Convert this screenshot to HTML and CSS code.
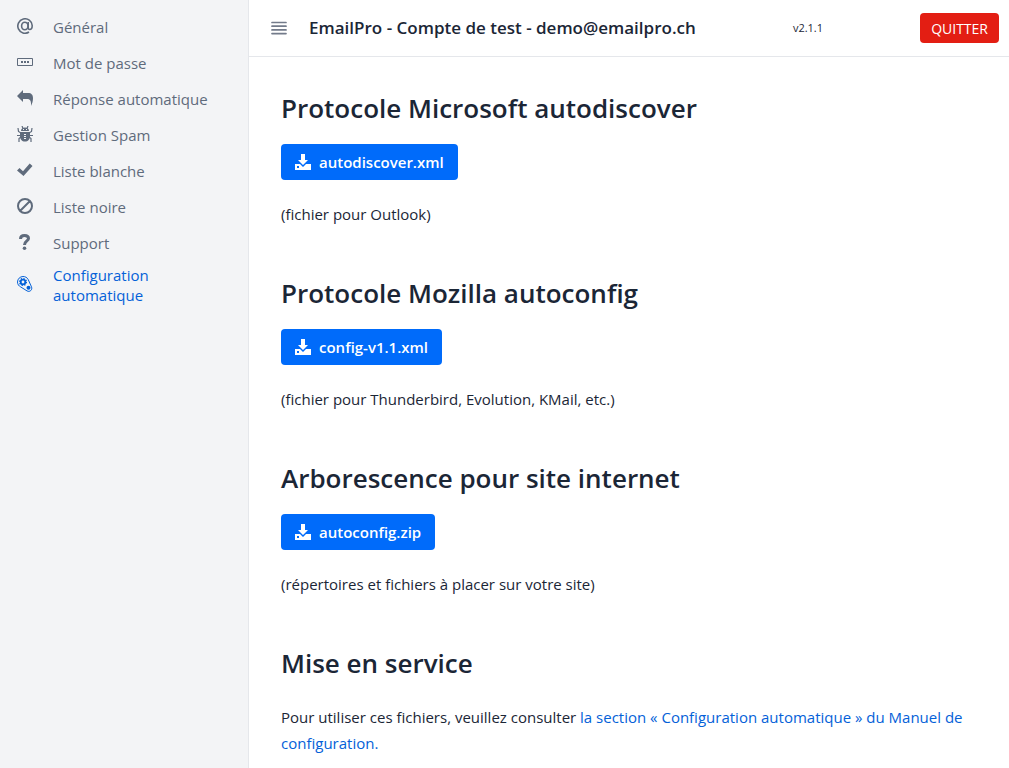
FILE: index.html
```html
<!DOCTYPE html>
<html lang="fr">
<head>
  <meta charset="UTF-8">
  <meta name="viewport" content="width=device-width, initial-scale=1">
  <title>EmailPro</title>
  <link rel="stylesheet" href="styles.css">
</head>
<body>
  <svg class="symbols" aria-hidden="true">
    <symbol id="download" viewBox="0 0 16 16">
      <path d="M6 0h4v6h3l-5 5-5-5h3z"/>
      <path fill-rule="evenodd" d="M0 10h5l3 3 3-3h5v6H0zM2 12v2h2v-2z"/>
    </symbol>
  </svg>
  <div class="layout">
    <nav class="sidebar">
      <ul class="menu">
        <li><a class="menu-link" href="#general">
          <svg class="icon" viewBox="0 0 16 16"><g fill="none" stroke="currentColor" stroke-width="1.600"><path d="M12 14A7.200 7.200 0 1 1 15.200 7.500c0 2.500-1 4-2.500 4-1 0-1.500-.7-1.500-2V4"/><ellipse cx="7.800" cy="8" rx="3.200" ry="3.700"/></g></svg>
          <span>Général</span></a></li>
        <li><a class="menu-link" href="#password">
          <svg class="icon" viewBox="0 0 16 16"><path fill="none" stroke="currentColor" d="M.5 4.500h15v7H.5z"/><path d="M4 7h2v2H4zM7 7h2v2H7zM10 7h2v2h-2z"/></svg>
          <span>Mot de passe</span></a></li>
        <li><a class="menu-link" href="#reply">
          <svg class="icon" viewBox="0 0 16 16"><path d="M0 6l6-6v3h5c3.500 0 5 2 5 5 0 3-.7 5.500-2 8 .3-4.500-.5-7-4-7H6v3z"/></svg>
          <span>Réponse automatique</span></a></li>
        <li><a class="menu-link" href="#spam">
          <svg class="icon" viewBox="0 0 16 16"><path fill-rule="evenodd" d="M4 5c0-2 1.500-3.500 4-3.500S12 3 12 5zM6 3v1h1V3zM9 3v1h1V3z"/><path fill-rule="evenodd" d="M3 6h10v4c0 3.500-2 5.500-5 5.500S3 13.500 3 10zM7 8v1h2V8zM7 10v1h2v-1zM7 12v1h2v-1z"/><path fill="none" stroke="currentColor" stroke-width="1.200" d="M6 2.500L5 0M10 2.500l1-2.500M4 7L1.500 5.500 1 2M12 7l2.500-1.500L15 2M4 9.500H0M12 9.500h4M4 11l-2 1.500V16M12 11l2 1.500V16"/></svg>
          <span>Gestion Spam</span></a></li>
        <li><a class="menu-link" href="#whitelist">
          <svg class="icon" viewBox="0 0 16 16"><path d="M0 8.500L2.500 6 6 9.200 12.700 1.500 15.500 4 6.500 14z"/></svg>
          <span>Liste blanche</span></a></li>
        <li><a class="menu-link" href="#blacklist">
          <svg class="icon" viewBox="0 0 16 16"><path fill="none" stroke="currentColor" stroke-width="2" d="M15 8A7 7 0 1 1 1 8a7 7 0 0 1 14 0zM3 13L13 3"/></svg>
          <span>Liste noire</span></a></li>
        <li><a class="menu-link" href="#support">
          <svg class="icon" viewBox="0 0 16 16"><path fill="none" stroke="currentColor" stroke-width="3" d="M3.500 5C3.500 2.500 5 1.500 7.500 1.500c2.500 0 4 1 4 3C11.500 7 7.500 7 7.500 11"/><circle cx="7.500" cy="14.200" r="1.800"/></svg>
          <span>Support</span></a></li>
        <li><a class="menu-link active" href="#autoconfig" aria-current="page">
          <svg class="icon" viewBox="0 0 16 16"><path fill="none" stroke="currentColor" d="M6 .5C3 .5.5 3 .5 6c0 2.300 1.300 4 3.300 5l6.200 3.900c3 1.600 5.700-1.300 4.500-4L11.200 3.500C10.100 1.500 8.300.5 6 .5z"/><circle cx="6" cy="6" r="2.300" fill="none" stroke="currentColor" stroke-width="1.800"/><circle cx="6" cy="6" r="3.400" fill="none" stroke="currentColor" stroke-width="1.300" stroke-dasharray="1.335"/><circle cx="11.500" cy="11.800" r="2"/></svg>
          <span>Configuration automatique</span></a></li>
      </ul>
    </nav>
    <div class="page">
      <header class="topbar">
        <button class="toggle" type="button" aria-label="Menu">
          <svg class="icon" viewBox="0 0 16 16"><path fill="none" stroke="currentColor" stroke-width="1.700" stroke-linecap="round" d="M1 2.500h14M1 6.200h14M1 9.900h14M1 13.600h14"/></svg>
        </button>
        <h1 class="title">EmailPro - Compte de test - demo@emailpro.ch</h1>
        <span class="version">v2.1.1</span>
        <button class="quit" type="button">QUITTER</button>
      </header>
      <main class="content">
        <section>
          <h2>Protocole Microsoft autodiscover</h2>
          <a class="button" href="#autodiscover.xml"><svg class="icon"><use href="#download"/></svg>autodiscover.xml</a>
          <p>(fichier pour Outlook)</p>
        </section>
        <section>
          <h2>Protocole Mozilla autoconfig</h2>
          <a class="button" href="#config-v1.1.xml"><svg class="icon"><use href="#download"/></svg>config-v1.1.xml</a>
          <p>(fichier pour Thunderbird, Evolution, KMail, etc.)</p>
        </section>
        <section>
          <h2>Arborescence pour site internet</h2>
          <a class="button" href="#autoconfig.zip"><svg class="icon"><use href="#download"/></svg>autoconfig.zip</a>
          <p>(répertoires et fichiers à placer sur votre site)</p>
        </section>
        <section>
          <h2>Mise en service</h2>
          <p>Pour utiliser ces fichiers, veuillez consulter <a href="#manuel">la section «&nbsp;Configuration automatique&nbsp;» du Manuel de configuration.</a></p>
        </section>
      </main>
    </div>
  </div>
</body>
</html>
```
FILE: styles.css
```css
* { box-sizing: border-box; }
body { margin: 0; font-family: "Segoe UI", "Open Sans", sans-serif; font-size: 15px; line-height: 26px; color: #1b2636; background: #fff; }
a { color: #0461d8; text-decoration: none; }
.symbols { display: none; }
.icon { flex: none; width: 16px; height: 16px; fill: currentColor; }

.layout { display: flex; min-height: 100vh; }

.sidebar { flex: none; width: 249px; background: #f3f4f6; border-right: 1px solid #e5e7eb; }
.menu { list-style: none; margin: 0; padding: 9px 72px 8px 17px; }
.menu-link { display: flex; align-items: center; gap: 20px; min-height: 36px; padding: 4px 0; line-height: 20px; color: #5f6b7c; white-space: nowrap; }
.menu-link .icon { margin-bottom: 2px; }
.menu-link.active { color: #0461d8; white-space: normal; }

.page { flex: 1; min-width: 0; }
.topbar { display: flex; align-items: center; height: 57px; padding: 0 10px 0 22px; border-bottom: 1px solid #e5e7eb; }
.toggle { display: flex; padding: 0; border: 0; background: none; color: #737b8a; }
.title { margin: 0 0 0 22px; font-size: 17px; font-weight: 600; white-space: nowrap; }
.version { margin: 0 auto; font-size: 11px; }
.quit { height: 30px; padding: 0 11px; border: 0; border-radius: 4px; background: #e31e13; color: #fff; font-family: inherit; font-size: 14px; }

.content { padding: 33px 32px 8px; }
section { margin-bottom: 48px; }
section:last-child { margin-bottom: 0; }
h2 { margin: 0 0 18px; font-size: 26px; font-weight: 600; line-height: 36px; }
p { margin: 21px 0 0; }
h2 + p { margin-top: 23px; }
.button { display: inline-flex; align-items: center; gap: 8px; height: 36px; padding: 0 14px; border-radius: 4px; background: #006bfa; color: #fff; font-weight: 600; vertical-align: top; }
```
